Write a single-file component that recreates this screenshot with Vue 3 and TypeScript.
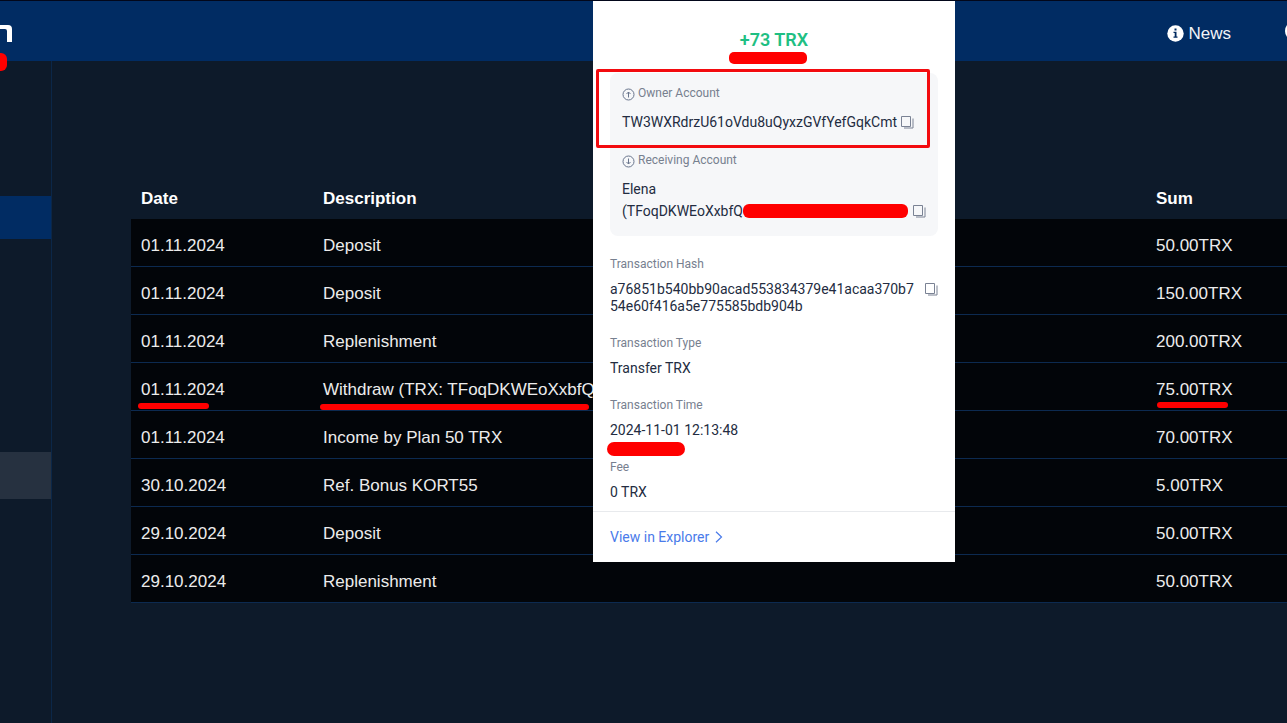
<script setup lang="ts">
interface Row {
  date: string
  description: string
  sum: string
  marked?: boolean
}

interface Field {
  label: string
  value: string
  copy?: boolean
  marked?: boolean
}

const rows: Row[] = [
  { date: '01.11.2024', description: 'Deposit', sum: '50.00TRX' },
  { date: '01.11.2024', description: 'Deposit', sum: '150.00TRX' },
  { date: '01.11.2024', description: 'Replenishment', sum: '200.00TRX' },
  { date: '01.11.2024', description: 'Withdraw (TRX: TFoqDKWEoXxbfQ', sum: '75.00TRX', marked: true },
  { date: '01.11.2024', description: 'Income by Plan 50 TRX', sum: '70.00TRX' },
  { date: '30.10.2024', description: 'Ref. Bonus KORT55', sum: '5.00TRX' },
  { date: '29.10.2024', description: 'Deposit', sum: '50.00TRX' },
  { date: '29.10.2024', description: 'Replenishment', sum: '50.00TRX' },
]

const fields: Field[] = [
  { label: 'Transaction Hash', value: 'a76851b540bb90acad553834379e41acaa370b754e60f416a5e775585bdb904b', copy: true },
  { label: 'Transaction Type', value: 'Transfer TRX' },
  { label: 'Transaction Time', value: '2024-11-01 12:13:48', marked: true },
  { label: 'Fee', value: '0 TRX' },
]
</script>

<template>
  <div class="page">
    <header class="topbar">
      <a class="logo" href="#" aria-label="Home">
        <svg width="12" height="17" viewBox="0 0 12 17"><path d="M0 0H8Q12 0 12 4V17H7V6Q7 4 5 4H0Z" fill="#fff" /></svg>
        <span class="mark mark-logo"></span>
      </a>
      <a class="news" href="#">
        <svg width="17" height="17" viewBox="0 0 17 17">
          <circle cx="8.500" cy="8.500" r="8.200" fill="#fff" />
          <path d="M7.500 3.500h2v2h-2zM6.500 6.800h3v4.700h1v1.300h-4v-1.300h1.200V8.100H6.500z" fill="#012a5f" />
        </svg>
        News
      </a>
      <span class="avatar"></span>
    </header>

    <div class="body">
      <nav class="sidebar" aria-label="Main">
        <a class="side-item active" href="#" aria-label="Account"></a>
        <a class="side-item muted" href="#" aria-label="Operations"></a>
      </nav>
      <main class="content">
        <table class="operations">
          <thead>
            <tr>
              <th class="col-date">Date</th>
              <th>Description</th>
              <th class="col-sum">Sum</th>
            </tr>
          </thead>
          <tbody>
            <tr v-for="(row, i) in rows" :key="i">
              <td><span class="cell">{{ row.date }}<i v-if="row.marked" class="mark mark-date"></i></span></td>
              <td><span class="cell">{{ row.description }}<i v-if="row.marked" class="mark mark-desc"></i></span></td>
              <td><span class="cell">{{ row.sum }}<i v-if="row.marked" class="mark mark-sum"></i></span></td>
            </tr>
          </tbody>
        </table>
      </main>
    </div>

    <section class="popup" aria-label="Transaction details">
      <h2 class="amount">+73 TRX<span class="mark mark-amount"></span></h2>

      <div class="accounts">
        <div class="frame"></div>
        <p class="label">
          <svg width="13" height="13" viewBox="0 0 13 13" fill="none" stroke="#68748c">
            <circle cx="6.500" cy="6.500" r="5.500" /><path d="M6.500 9.500V4M4.500 6l2-2 2 2" />
          </svg>
          Owner Account
        </p>
        <p class="account owner">
          TW3WXRdrzU61oVdu8uQyxzGVfYefGqkCmt
          <button class="copy" type="button" aria-label="Copy owner account">
            <svg width="13" height="13" viewBox="0 0 13 13" fill="none" stroke="#7a8294"><path d="M.5.5h9v10h-9zM12 2.500v9.500h-9" /></svg>
          </button>
        </p>
        <p class="label">
          <svg width="13" height="13" viewBox="0 0 13 13" fill="none" stroke="#68748c">
            <circle cx="6.500" cy="6.500" r="5.500" /><path d="M6.500 3.500V9M4.500 7l2 2 2-2" />
          </svg>
          Receiving Account
        </p>
        <p class="account">Elena</p>
        <p class="account receiver">
          (TFoqDKWEoXxbfQ<span class="redacted"></span>
          <button class="copy" type="button" aria-label="Copy receiving account">
            <svg width="13" height="13" viewBox="0 0 13 13" fill="none" stroke="#7a8294"><path d="M.5.5h9v10h-9zM12 2.500v9.500h-9" /></svg>
          </button>
        </p>
      </div>

      <dl class="fields">
        <div v-for="field in fields" :key="field.label" class="field">
          <dt>{{ field.label }}</dt>
          <dd>
            <span class="value">{{ field.value }}</span>
            <button v-if="field.copy" class="copy" type="button" aria-label="Copy transaction hash">
              <svg width="13" height="13" viewBox="0 0 13 13" fill="none" stroke="#7a8294"><path d="M.5.5h9v10h-9zM12 2.500v9.500h-9" /></svg>
            </button>
            <i v-if="field.marked" class="mark mark-time"></i>
          </dd>
        </div>
      </dl>

      <footer class="popup-footer">
        <a href="#">
          View in Explorer
          <svg width="8" height="12" viewBox="0 0 8 12" fill="none" stroke="#4a7bea" stroke-width="1.200"><path d="M1 .8 6.500 6 1 11.200" /></svg>
        </a>
      </footer>
    </section>
  </div>
</template>

<style>
body {
  margin: 0;
  background: #0d1a2a;
}
</style>

<style scoped>
.page {
  position: relative;
  box-sizing: border-box;
  min-height: 100vh;
  display: flex;
  flex-direction: column;
  overflow: hidden;
  border-top: 1px solid #02071a;
  background: #0d1a2a;
  color: #ececec;
  font-family: "Liberation Sans", Arial, sans-serif;
  font-size: 17px;
}

.topbar {
  display: flex;
  align-items: center;
  height: 60px;
  background: #012c63;
}

.logo {
  position: relative;
  display: flex;
  margin-top: 5px;
}

.news {
  display: flex;
  align-items: center;
  gap: 4px;
  margin: 5px 54px 0 auto;
  color: #f2f4f8;
  text-decoration: none;
}

.avatar {
  width: 20px;
  height: 20px;
  margin-right: -18px;
  border-radius: 50%;
  background: #fff;
}

.body {
  display: flex;
  flex: 1;
}

.sidebar {
  display: flex;
  flex-direction: column;
  gap: 213px;
  box-sizing: border-box;
  width: 52px;
  padding-top: 135px;
  border-right: 1px solid #0b2748;
}

.side-item {
  height: 43px;
}

.side-item.active {
  background: #012c63;
}

.side-item.muted {
  height: 47px;
  background: #263140;
}

.content {
  flex: 1;
  padding: 116px 0 0 79px;
}

.operations {
  width: 100%;
  table-layout: fixed;
  border-collapse: separate;
  border-spacing: 0;
}

th,
td {
  box-sizing: border-box;
  text-align: left;
  white-space: nowrap;
}

th {
  height: 42px;
  padding: 2px 10px 0;
  color: #fff;
}

td {
  height: 48px;
  padding: 6px 10px 0;
  border-bottom: 1px solid #0c2a50;
  background: #020509;
}

.col-date {
  width: 182px;
}

.col-sum {
  width: 141px;
}

.cell {
  position: relative;
}

.mark {
  position: absolute;
  background: #f00;
}

.mark-logo {
  top: 28px;
  left: -12px;
  width: 19px;
  height: 18px;
  border-radius: 6px;
}

.mark-date,
.mark-desc,
.mark-sum {
  height: 6px;
  border-radius: 3px;
}

.mark-date {
  top: 23px;
  left: -3px;
  width: 71px;
}

.mark-desc {
  top: 24px;
  left: -3px;
  width: 269px;
}

.mark-sum {
  top: 22px;
  left: 1px;
  width: 71px;
}

.popup {
  position: absolute;
  top: 0;
  left: 593px;
  box-sizing: border-box;
  width: 362px;
  padding-top: 27px;
  background: #fff;
  color: #232c41;
  font-family: Roboto, sans-serif;
  font-size: 14px;
}

.amount {
  position: relative;
  margin: 0 0 21px;
  color: #1fbf83;
  font-size: 18px;
  font-weight: 600;
  line-height: 24px;
  text-align: center;
}

.mark-amount {
  top: 24px;
  left: 136px;
  width: 78px;
  height: 12px;
  border-radius: 5px;
}

.accounts {
  position: relative;
  margin: 0 17px 20px;
  padding: 12px 12px 14px;
  border-radius: 8px;
  background: #f6f7f9;
}

.frame {
  position: absolute;
  top: -4px;
  left: -14px;
  box-sizing: border-box;
  width: 334px;
  height: 79px;
  border: 3px solid #f30b0f;
  border-radius: 2px;
}

.label {
  display: flex;
  align-items: center;
  gap: 3px;
  margin: 0 0 10px;
  color: #77808f;
  font-size: 12px;
  line-height: 16px;
}

.label svg {
  margin-top: 2px;
}

.account {
  display: flex;
  align-items: center;
  margin: 0;
  line-height: 22px;
  white-space: nowrap;
}

.owner {
  gap: 4px;
  margin-bottom: 19px;
}

.redacted {
  width: 166px;
  height: 14px;
  margin-right: 5px;
  border-radius: 6px;
  background: #f00;
}

.copy {
  position: relative;
  display: flex;
  padding: 0;
  border: 0;
  background: none;
  cursor: pointer;
}

.fields {
  display: grid;
  gap: 20px;
  margin: 0;
  padding: 0 17px 10px;
}

.field dt {
  margin-bottom: 9px;
  color: #77808f;
  font-size: 12px;
  line-height: 16px;
}

.field dd {
  position: relative;
  display: flex;
  align-items: flex-start;
  justify-content: space-between;
  margin: 0;
  line-height: 17px;
}

.value {
  max-width: 306px;
  overflow-wrap: anywhere;
}

.field .copy {
  padding-top: 2px;
}

.mark-time {
  top: 20px;
  left: -3px;
  width: 78px;
  height: 14px;
  border-radius: 7px;
}

.popup-footer {
  display: flex;
  align-items: center;
  height: 50px;
  padding: 0 17px;
  border-top: 1px solid #e8eaed;
}

.popup-footer a {
  display: flex;
  align-items: center;
  gap: 6px;
  color: #4a7bea;
  text-decoration: none;
}
</style>
